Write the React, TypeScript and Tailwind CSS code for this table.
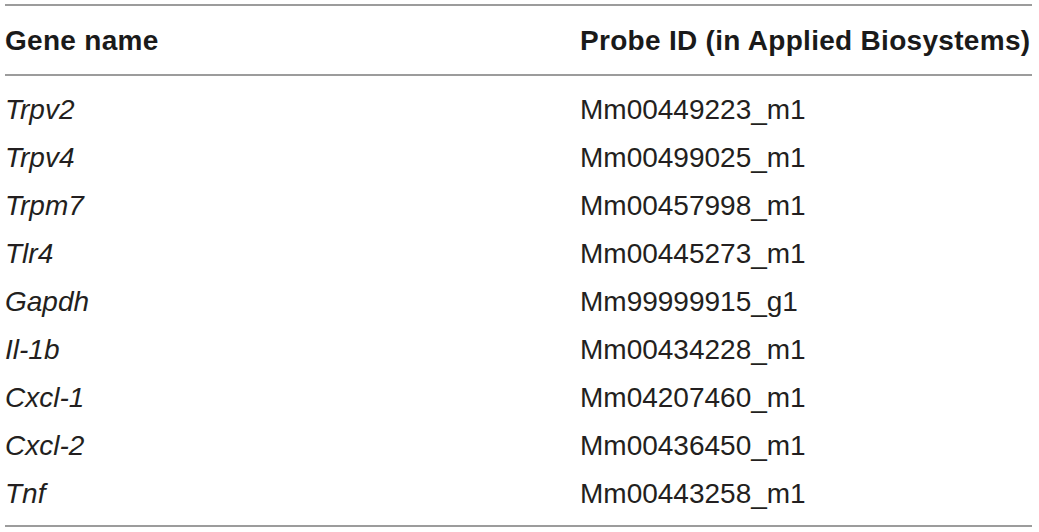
const rows: [string, string][] = [
  ['Trpv2', 'Mm00449223_m1'],
  ['Trpv4', 'Mm00499025_m1'],
  ['Trpm7', 'Mm00457998_m1'],
  ['Tlr4', 'Mm00445273_m1'],
  ['Gapdh', 'Mm99999915_g1'],
  ['Il-1b', 'Mm00434228_m1'],
  ['Cxcl-1', 'Mm04207460_m1'],
  ['Cxcl-2', 'Mm00436450_m1'],
  ['Tnf', 'Mm00443258_m1'],
];

export default function App() {
  return (
    <div className="w-[1039px] h-[532px] bg-white pl-[5px] pt-[4px] font-['Liberation_Sans',Arial,sans-serif] text-[#231f20]">
      <div className="w-[1027px] border-t-2 border-b-2 border-[#9c9c9c]">
        {/* Header */}
        <div className="grid grid-cols-[575px_452px] h-[70px] items-center border-b-2 border-[#9c9c9c] pt-[2px] text-[28px] leading-[34px] font-bold tracking-[0.3px] text-[#1a1a1a]">
          <div>Gene name</div>
          <div className="whitespace-nowrap">Probe ID (in Applied Biosystems)</div>
        </div>

        {/* Body */}
        <div className="pt-[10px] pb-[7px]">
          {rows.map(([gene, probe]) => (
            <div key={gene} className="grid grid-cols-[575px_452px] h-[48px] text-[28px] leading-[48px]">
              <div className="italic">{gene}</div>
              <div>{probe}</div>
            </div>
          ))}
        </div>
      </div>
    </div>
  );
}
